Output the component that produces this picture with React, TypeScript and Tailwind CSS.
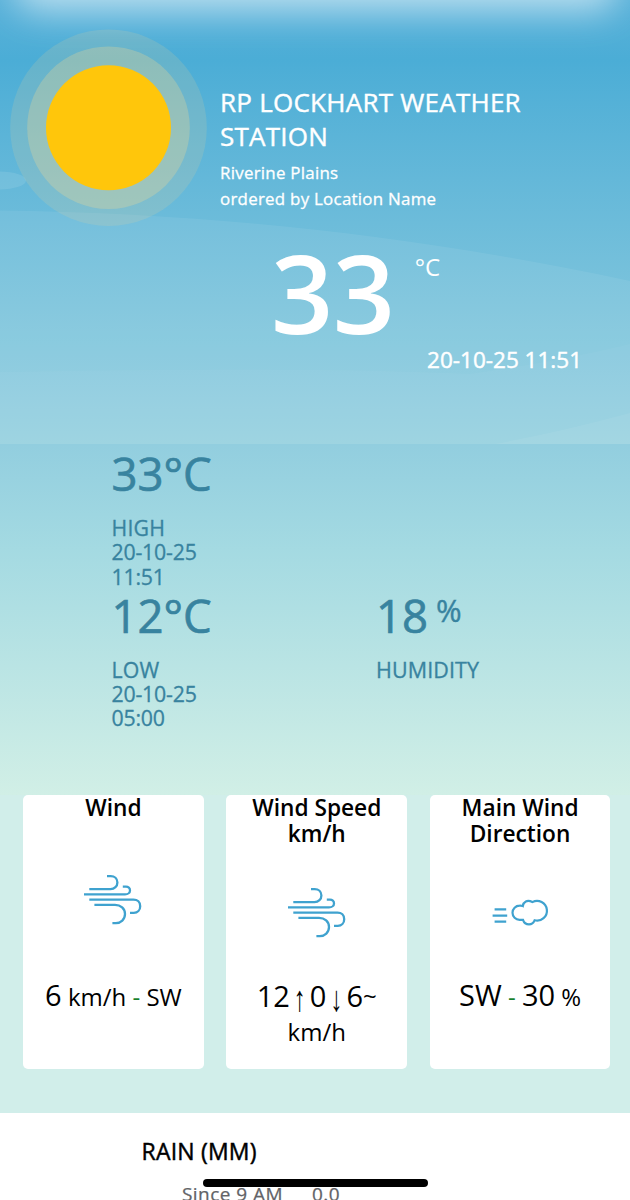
import React from "react";

function Sky() {
  return (
    <svg className="absolute inset-0 h-[444px] w-full" viewBox="0 0 630 444" preserveAspectRatio="none" aria-hidden="true">
      <defs>
        <filter id="soft" x="-20%" y="-200%" width="140%" height="500%">
          <feGaussianBlur stdDeviation="18" />
        </filter>
      </defs>
      <rect x="16" y="-50" width="600" height="60" rx="20" fill="#ffffff" opacity="0.6" filter="url(#soft)" />
      <path d="M0 210.500C210 213 420 236 630 281V444H0Z" fill="#ffffff" opacity="0.07" />
      <path d="M0 372Q310 366 470 374Q560 361 630 344V444H0Z" fill="#ffffff" opacity="0.03" />
      <path d="M495 444Q560 432 630 413V444Z" fill="#ffffff" opacity="0.06" />
      <ellipse cx="0" cy="180.500" rx="26" ry="9" fill="#ffffff" opacity="0.1" />
    </svg>
  );
}

function Sun() {
  return (
    <svg className="h-[198px] w-[198px] shrink-0" viewBox="0 0 198 198" aria-hidden="true">
      <circle cx="99.500" cy="98.700" r="98.300" fill="#ffd88c" opacity="0.15" />
      <circle cx="99.500" cy="98.700" r="81.300" fill="#ffdc8c" opacity="0.26" />
      <circle cx="99.500" cy="98.700" r="62.500" fill="#ffc60b" />
    </svg>
  );
}

function WindIcon() {
  return (
    <svg className="h-[50px] w-[58px] overflow-visible" viewBox="0 0.800 58 50" fill="none" stroke="#3fa2cf" strokeWidth="2.300" aria-hidden="true">
      <path d="M5.300 14.900H26.500C30.500 14.900 33.400 12 33.400 8.300C33.400 4.500 30.500 1.900 26.700 1.900H23" />
      <path d="M0 20.200H41C44 20.200 46 18.400 46 16.200C46 13.900 44.200 12.400 42 12.400H38.800" />
      <path d="M5.300 25.400H49.500C53.500 25.400 56.200 28.100 56.200 32C56.200 35.900 53.500 38.600 49.800 38.600H46" />
      <path d="M10.400 30.700H31C36.700 30.700 41 34.500 41 39.900C41 45.300 36.900 49 31.800 49H28.400" />
    </svg>
  );
}

function GustIcon() {
  return (
    <svg className="h-[26px] w-[56px] overflow-visible" viewBox="0 0.300 56 26" fill="none" stroke="#3fa2cf" strokeWidth="2.200" aria-hidden="true">
      <path d="M2.600 9.700H14.200M0.600 15.900H15.200M2.600 22H14.200" />
      <path d="M30.800 6.400A6.700 6.700 0 0 0 27.600 5.900A7.100 7.100 0 0 0 27.600 20.100H31C32 23.100 34.200 24.600 37 24.600C39.700 24.600 41.600 23 42.600 20.600A9.850 9.850 0 1 0 40.400 2.400C35-0.300 31.400 2.200 30.800 6.400Z" />
    </svg>
  );
}

function Extreme({ value, label, time }: { value: string; label: string; time: string }) {
  return (
    <div className="w-28">
      <div className="text-[45.500px] leading-[52px] whitespace-nowrap [-webkit-text-stroke:0.700px]">{value}</div>
      <div className="mt-[17px] text-[21.300px] leading-[24.300px] [-webkit-text-stroke:0.300px]">
        <div className="tracking-[0.200px]">{label}</div>
        <div className="w-24 tracking-[-0.200px]">20-10-25 {time}</div>
      </div>
    </div>
  );
}

function Card({ title, icon, children }: { title: React.ReactNode; icon: React.ReactNode; children: React.ReactNode }) {
  return (
    <section className="flex h-[274px] flex-col items-center rounded-[5px] bg-white text-center text-black">
      <h2 className="-mt-[0.500px] mb-[0.500px] text-[22.700px] leading-[26px] font-semibold">{title}</h2>
      {icon}
      {children}
    </section>
  );
}

function Arrow({ children }: { children: string }) {
  return (
    <span className="flex h-[37px] w-[20px] translate-y-[3px] scale-y-150 items-center justify-center font-['Liberation_Sans',sans-serif] text-[24px] leading-none">
      {children}
    </span>
  );
}

export default function App() {
  return (
    <main className="relative flex h-[1200px] w-[630px] flex-col overflow-hidden bg-white font-['Open_Sans',sans-serif] font-normal">
      <header className="relative h-[444px] bg-linear-to-b from-[#59b1d9] from-[0px] via-[#4badd6] via-[60px] to-[#94d0df] to-[444px] text-white">
        <Sky />
        <div className="relative flex pt-[29px] pl-[9px]">
          <Sun />
          <div className="ml-[13px] pt-[57px]">
            <h1 className="text-[26px] leading-[33.500px] tracking-[0.250px] [-webkit-text-stroke:0.400px]">RP LOCKHART WEATHER<br />STATION</h1>
            <p className="mt-[7px] text-[16.900px] leading-[26.300px] tracking-[0.260px] [-webkit-text-stroke:0.300px]">Riverine Plains<br />ordered by Location Name</p>
          </div>
        </div>
        <div className="relative mt-[10px] flex pl-[271px]">
          <span className="text-[109px] leading-[110px] font-semibold tracking-[-0.500px]">33</span>
          <span className="mt-[18px] ml-[20px] text-[24px] leading-[24px]">°C</span>
        </div>
        <div className="relative -mt-[2px] pr-[48px] text-right text-[22.500px] leading-[30px] [-webkit-text-stroke:0.450px]">20-10-25 11:51</div>
      </header>

      <div className="h-[351px] bg-linear-to-b from-[#92cedf] via-[#a4dae2] via-30% to-[#d1efe6] pt-[3px] pl-[111.500px] text-[#38839f]">
        <Extreme value="33°C" label="HIGH" time="11:51" />
        <div className="flex">
          <Extreme value="12°C" label="LOW" time="05:00" />
          <div className="ml-[152.500px]">
            <div className="flex text-[45.500px] leading-[52px] [-webkit-text-stroke:0.700px]">
              18<span className="-mt-[5px] ml-[8px] text-[31px] [-webkit-text-stroke:0.400px]">%</span>
            </div>
            <div className="mt-[17px] text-[21.500px] leading-[24.300px] tracking-[0.100px] [-webkit-text-stroke:0.300px]">HUMIDITY</div>
          </div>
        </div>
      </div>

      <div className="grid h-[318px] grid-cols-3 items-start gap-[22.500px] bg-[#d1eeea] pr-[19.500px] pl-[23px]">
        <Card title="Wind" icon={<div className="mt-[54px]"><WindIcon /></div>}>
          <div className="mt-[50px] text-[24px] leading-[40px]">
            <span className="text-[29px]">6</span> km/h <span className="text-[#16802d]">-</span> SW
          </div>
        </Card>
        <Card title={<>Wind Speed<br />km/h</>} icon={<div className="mt-[41px]"><WindIcon /></div>}>
          <div className="mt-[39px] text-[24px] leading-[37px]">
            <div className="flex h-[37px] text-[29px]">
              12<Arrow>↑</Arrow>0<Arrow>↓</Arrow>6<span className="text-[24px]">~</span>
            </div>
            <div className="-mt-[1px]">km/h</div>
          </div>
        </Card>
        <Card title={<>Main Wind<br />Direction</>} icon={<div className="mt-[53px]"><GustIcon /></div>}>
          <div className="mt-[49px] text-[24px] leading-[40px]">
            <span className="text-[29px]">SW</span> <span className="text-[#16802d]">-</span> <span className="text-[29px]">30</span> %
          </div>
        </Card>
      </div>

      <section className="h-[87px] bg-white pt-[22px] text-black">
        <h2 className="pl-[141.500px] text-[23px] leading-[32px] tracking-[0.200px] [-webkit-text-stroke:0.450px]">RAIN (MM)</h2>
        <div className="mt-[14px] flex gap-[29px] pl-[182px] text-[19px] leading-[26px] tracking-[0.450px] text-[#626367] [-webkit-text-stroke:0.250px]">
          <span>Since 9 AM</span>
          <span>0.0</span>
        </div>
      </section>
      <div className="absolute top-[1179px] left-[203px] h-[8px] w-[225px] rounded-full bg-black" />
    </main>
  );
}
